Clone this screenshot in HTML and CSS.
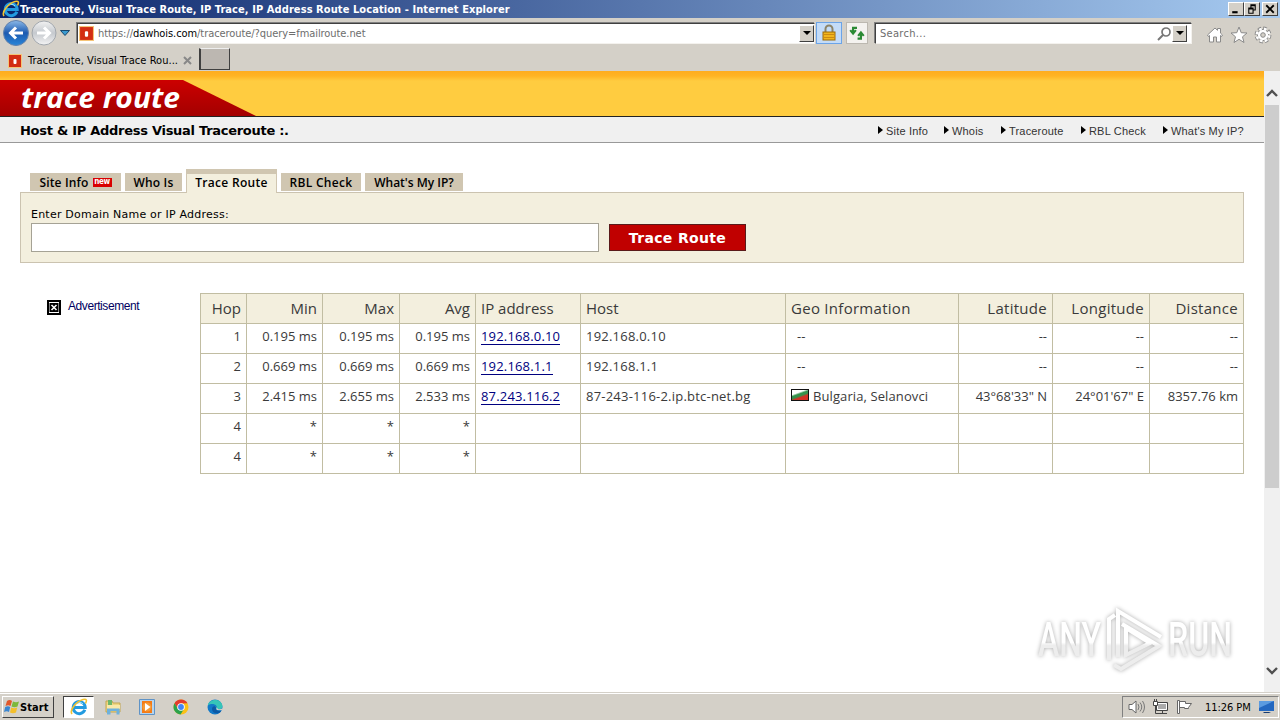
FILE: index.html
```
<!DOCTYPE html>
<html lang="en">
    <head>
        <meta charset="utf-8">
        <title>Traceroute, Visual Trace Route, IP Trace, IP Address Route Location</title>
        <link rel="stylesheet" href="styles.css">
    </head>
    <body>
        <svg class="defs" width="0" height="0">
            <symbol id="ie" viewBox="0 0 18 18">
                <path d="M14.8 11.8A6 6 0 1 1 15.2 9.400H4.600" fill="none" stroke="#239be0" stroke-width="3"/>
                <path d="M5 7a4.500 4 0 0 1 8-1" fill="none" stroke="#9be3ff" stroke-width="1"/>
                <path d="M2 16C-1 12 7 3 13 1.500c4-1 4 1 2.500 4" fill="none" stroke="#f2c230" stroke-width="1.600"/>
            </symbol>
            <symbol id="site" viewBox="0 0 14 14">
                <rect width="14" height="14" fill="#f5c477"/>
                <rect x="1" y="1" width="12" height="12" fill="#d32d12"/>
                <rect x="5.500" y="5" width="3" height="5" rx="1" fill="#fff"/>
            </symbol>
        </svg>

        <div class="titlebar">
            <svg class="title-icon" width="18" height="18"><use href="#ie"/></svg>
            <span class="title-text">Traceroute, Visual Trace Route, IP Trace, IP Address Route Location - Internet Explorer</span>
            <div class="window-buttons">
                <svg class="win-btn" viewBox="0 0 13 11"><path d="M3 8.500h5" stroke="#000" stroke-width="2"/></svg>
                <svg class="win-btn" viewBox="0 0 13 11"><path d="M5 1.500h5M5 2.500h5M9.500 2v4.500H8M5.500 2v2M3 4.500h5M3 5.500h5M3.500 5v4.500h4V5" fill="none" stroke="#000"/></svg>
                <svg class="win-btn close" viewBox="0 0 13 11"><path d="M3 2l7 7M10 2l-7 7" stroke="#000" stroke-width="1.700"/></svg>
            </div>
        </div>

        <div class="navbar">
            <svg class="back" width="28" height="28" viewBox="0 0 28 28">
                <defs><linearGradient id="blue" x2="0" y2="1"><stop stop-color="#8bb9e8"/><stop offset=".5" stop-color="#1c5ab0"/><stop offset="1" stop-color="#2a86d8"/></linearGradient></defs>
                <circle cx="14" cy="14" r="12.500" fill="url(#blue)" stroke="#6281ac"/>
                <path d="M21 14H9M14 8.500L8.500 14l5.500 5.500" fill="none" stroke="#fff" stroke-width="3"/>
            </svg>
            <svg class="forward" width="28" height="28" viewBox="0 0 28 28">
                <defs><linearGradient id="gray" x2="0" y2="1"><stop stop-color="#f2f2f2"/><stop offset=".5" stop-color="#c5c9ce"/><stop offset="1" stop-color="#f4f4f4"/></linearGradient></defs>
                <circle cx="14" cy="14" r="12" fill="url(#gray)" stroke="#a2a7ad"/>
                <path d="M7 14h12M14 8.500l5.500 5.500-5.500 5.500" fill="none" stroke="#fff" stroke-width="3"/>
            </svg>
            <svg class="history" width="10" height="6" viewBox="0 0 10 6"><path d="M.500.500h9L5 5.500z" fill="#3a9bd0" stroke="#17466c"/></svg>
            <div class="address">
                <svg width="15" height="15"><use href="#site"/></svg>
                <span class="url"><span class="dim">https://</span>dawhois.com<span class="dim">/traceroute/?query=fmailroute.net</span></span>
                <span class="drop"></span>
            </div>
            <div class="nav-btn lock">
                <svg width="16" height="18" viewBox="0 0 16 18">
                    <path d="M4.500 9V5a3.500 3.500 0 0 1 7 0v4" fill="none" stroke="#8c8468" stroke-width="2"/>
                    <rect x="2" y="8" width="12" height="8" fill="#f1b51c" stroke="#9c6a08"/>
                    <path d="M2 10.500h12M2 13.500h12" stroke="#cc8a10"/>
                </svg>
            </div>
            <div class="nav-btn refresh">
                <svg width="18" height="18" viewBox="0 0 16 16">
                    <path d="M8 3.500H4.500V8M2 5.500L4.500 8.500 7 5.500M8.500 13h3V8M9 10.500l2.500-3 2.500 3" fill="none" stroke="#2b8a34" stroke-width="1.900"/>
                </svg>
            </div>
            <div class="search">
                <span class="search-text">Search...</span>
                <svg width="15" height="15" viewBox="0 0 15 15"><circle cx="9" cy="6" r="4" fill="none" stroke="#777" stroke-width="1.700"/><path d="M6 9l-5 5" stroke="#777" stroke-width="2"/></svg>
                <span class="drop"></span>
            </div>
            <div class="tools">
                <svg width="18" height="18" viewBox="0 0 18 18"><path d="M1.500 9L9 2l2.500 2.300V2.500h3v4.600l2 1.900-1 1.500-1-1V16h-4v-5h-3v5h-4V9.500l-1 1z" fill="#fff" stroke="#8a8a8a"/></svg>
                <svg width="18" height="18" viewBox="0 0 18 18"><path d="M9 1l2.200 5.700 5.800.300-4.500 3.800L14 16.500 9 13.300 4 16.500l1.500-5.700L1 7l5.800-.300z" fill="#fff" stroke="#8a8a8a"/></svg>
                <svg width="18" height="18" viewBox="0 0 18 18">
                    <circle cx="9" cy="9" r="6.700" fill="none" stroke="#8a8a8a" stroke-width="3.400" stroke-dasharray="3.400 1.860"/>
                    <circle cx="9" cy="9" r="5.600" fill="#fff" stroke="#8a8a8a"/>
                    <circle cx="9" cy="9" r="6.200" fill="none" stroke="#fff" stroke-width="2.600" stroke-dasharray="2.600 2.270" stroke-dashoffset="-.2"/>
                    <circle cx="9" cy="9" r="2.300" fill="#d4d0c8" stroke="#8a8a8a"/>
                </svg>
            </div>
        </div>

        <div class="tabbar">
            <div class="browser-tab">
                <svg width="14" height="14"><use href="#site"/></svg>
                <span class="tab-title">Traceroute, Visual Trace Rou...</span>
                <svg class="tab-close" width="9" height="9" viewBox="0 0 9 9"><path d="M1 1l7 7M8 1L1 8" stroke="#888" stroke-width="2"/></svg>
            </div>
            <div class="new-tab"></div>
        </div>

        <div class="viewport">
            <div class="page">
                <div class="banner">
                    <svg class="banner-shape" width="256" height="36" viewBox="0 0 256 36">
                        <defs><linearGradient id="red" x2="0" y2="1"><stop stop-color="#cc0000"/><stop offset="1" stop-color="#a30000"/></linearGradient></defs>
                        <path d="M0 0h183l73 36H0z" fill="url(#red)"/>
                        <text class="logo" x="21" y="28" textLength="159" lengthAdjust="spacingAndGlyphs">trace route</text>
                    </svg>
                </div>
                <div class="subhead">
                    <span class="slogan">Host &amp; IP Address Visual Traceroute :.</span>
                    <div class="links">
                        <a class="l1">Site Info</a>
                        <a class="l2">Whois</a>
                        <a class="l3">Traceroute</a>
                        <a class="l4">RBL Check</a>
                        <a class="l5">What's My IP?</a>
                    </div>
                </div>

                <div class="tabs">
                    <div class="tab t1">Site Info <span class="new">new</span></div>
                    <div class="tab t2">Who Is</div>
                    <div class="tab t3 active">Trace Route</div>
                    <div class="tab t4">RBL Check</div>
                    <div class="tab t5">What's My IP?</div>
                </div>
                <div class="panel">
                    <div class="label">Enter Domain Name or IP Address:</div>
                    <div class="form">
                        <input class="query" type="text">
                        <button class="submit">Trace Route</button>
                    </div>
                </div>

                <div class="content">
                    <div class="ad">
                        <svg width="14" height="15" viewBox="0 0 14 15"><path d="M1 1h12v13H1z" fill="#fff" stroke="#000" stroke-width="2"/><path d="M2.500 3h9v9h-9z" fill="#000"/><path d="M4.500 5l5 5M9.500 5l-5 5" stroke="#fff" stroke-width="1.600"/></svg>
                        <span>Advertisement</span>
                    </div>
                    <table class="hops">
                        <colgroup>
                            <col class="c-hop"><col class="c-min"><col class="c-max"><col class="c-avg"><col class="c-ip">
                            <col class="c-host"><col class="c-geo"><col class="c-lat"><col class="c-lon"><col class="c-dist">
                        </colgroup>
                        <tr><th>Hop</th><th>Min</th><th>Max</th><th>Avg</th><th class="left">IP address</th><th class="left">Host</th><th class="left wide">Geo Information</th><th class="wide">Latitude</th><th class="wide">Longitude</th><th class="wide">Distance</th></tr>
                        <tr><td>1</td><td>0.195 ms</td><td>0.195 ms</td><td>0.195 ms</td><td class="left"><a>192.168.0.10</a></td><td class="left host">192.168.0.10</td><td class="left none">--</td><td>--</td><td>--</td><td>--</td></tr>
                        <tr><td>2</td><td>0.669 ms</td><td>0.669 ms</td><td>0.669 ms</td><td class="left"><a>192.168.1.1</a></td><td class="left host">192.168.1.1</td><td class="left none">--</td><td>--</td><td>--</td><td>--</td></tr>
                        <tr><td>3</td><td>2.415 ms</td><td>2.655 ms</td><td>2.533 ms</td><td class="left"><a>87.243.116.2</a></td><td class="left host">87-243-116-2.ip.btc-net.bg</td><td class="left geo"><span class="flag"></span>Bulgaria, Selanovci</td><td class="coord">43°68'33" N</td><td class="coord">24°01'67" E</td><td>8357.76 km</td></tr>
                        <tr><td>4</td><td>*</td><td>*</td><td>*</td><td></td><td></td><td></td><td></td><td></td><td></td></tr>
                        <tr><td>4</td><td>*</td><td>*</td><td>*</td><td></td><td></td><td></td><td></td><td></td><td></td></tr>
                    </table>
                </div>

                <svg class="watermark" width="204" height="68" viewBox="0 0 204 68">
                    <defs><linearGradient id="fade" x2="0" y2="1"><stop offset=".55" stop-color="#fff"/><stop offset=".6" stop-color="#ededed"/></linearGradient></defs>
                    <g class="mark-text">
                        <text x="4" y="50" textLength="63" lengthAdjust="spacingAndGlyphs">ANY</text>
                        <text x="134" y="50" textLength="64" lengthAdjust="spacingAndGlyphs">RUN</text>
                    </g>
                    <g class="mark-logo">
                        <path d="M75 54V13l6-4M84 51V5l43 26M88 18l37 22-38 23-7-4M92 49V22l24 15z"/>
                    </g>
                </svg>
            </div>
            <div class="scrollbar">
                <svg class="arrow" width="12" height="8" viewBox="0 0 12 8"><path d="M1 7l5-5 5 5" fill="none" stroke="#505050" stroke-width="2.400"/></svg>
                <div class="thumb"></div>
                <svg class="arrow" width="12" height="8" viewBox="0 0 12 8"><path d="M1 1l5 5 5-5" fill="none" stroke="#505050" stroke-width="2.400"/></svg>
            </div>
        </div>

        <div class="taskbar">
            <div class="start">
                <svg width="16" height="16" viewBox="0 0 16 16">
                    <path d="M3 2c2-1.500 4-1 5 0L6.500 7c-1.500-1-3-1-5 0z" fill="#e2582a"/>
                    <path d="M9 2.500c2 1 4 1 6 0L13.500 7.500c-2 1-4 1-6 0z" fill="#7db83c"/>
                    <path d="M1.200 8c2-1 3.500-1 5 0L5 13c-1.500-1-3-1-5 0z" fill="#3b86d0"/>
                    <path d="M7.200 8.500c2 1 4 1 6 0L12 13.500c-2 1-4 1-6 0z" fill="#f4bf2b"/>
                </svg>
                <span>Start</span>
            </div>
            <div class="task open"><svg width="18" height="18"><use href="#ie"/></svg></div>
            <div class="task"><svg width="16" height="16" viewBox="0 0 16 16"><path d="M1 2h6l1 2h7v9H1z" fill="#f0d681" stroke="#c2a650"/><path d="M3 1h4v5H3z" fill="#6db66b"/><path d="M2 6h13v4H2z" fill="#f9e9a9"/><path d="M2 15.500V9.500h12.500v6h-3V12h-6v3.500z" fill="#6fb1dc"/></svg></div>
            <div class="task"><svg width="16" height="16" viewBox="0 0 16 16"><path d="M.500.500h15v15H.500z" fill="#b5d4ee" stroke="#5f93c6"/><path d="M3 2h10v12H3z" fill="#f47b16"/><circle cx="8" cy="8" r="4.500" fill="#f59a36"/><path d="M6 4l5.500 4L6 12z" fill="#fff"/></svg></div>
            <div class="task"><svg width="16" height="16" viewBox="0 0 16 16"><circle cx="8" cy="8" r="7.500" fill="#fbc116"/><path d="M1.500 4.250A7.500 7.500 0 0 1 14.500 4.250L8 4.500 4.800 9.800z" fill="#e33b2e"/><path d="M1.500 4.250A7.500 7.500 0 0 0 7.500 15.500L11 10H5z" fill="#2ba24c"/><circle cx="8" cy="8" r="3.800" fill="#fff"/><circle cx="8" cy="8" r="2.900" fill="#4285f4"/></svg></div>
            <div class="task"><svg width="16" height="16" viewBox="0 0 16 16"><circle cx="8" cy="8" r="7.500" fill="#1279c8"/><path d="M.800 6.500C2 0 14-1.500 15.500 7c0 3-3 4-6 3 2-4-4-7-8.700-3.500z" fill="#36c5b8"/><path d="M9 8c-1 3 2 5 5.500 3.500C12 16 5 15 5 10c0-3 3-3.500 4-2z" fill="#0c59a4"/><path d="M8 7.500c2 0 1 3 2 3.500l5 .300.500-2c-2 1.500-5 1-5 0z" fill="#d4d0c8"/></svg></div>
            <div class="tray">
                <svg class="speaker" width="17" height="16" viewBox="0 0 17 16"><path d="M1 5.500h3L8 2v12l-4-3.500H1z" fill="#fff" stroke="#666"/><path d="M10 5q2 3 0 6M12 3.500q3.500 4.500 0 9M14.500 2q4 6 0 12" fill="none" stroke="#777"/></svg>
                <svg class="net" width="17" height="16" viewBox="0 0 17 16"><path d="M4.500 3.500h11v8h-11z" fill="#aaa" stroke="#444"/><path d="M5.500 4.500h9v6h-9z" fill="none" stroke="#fff"/><path d="M7 14.500h8M10.500 12v2" stroke="#444"/><path d="M1.500 2.500h4v4h-4z" fill="#fff" stroke="#444"/><path d="M2.500 0v2M4.500 0v2M3.500 7v7.500H7" fill="none" stroke="#444"/></svg>
                <svg class="flag-icon" width="17" height="16" viewBox="0 0 17 16"><path d="M1.500 1.500h2v13h-2zM3.500 2.500h6v2h6l-3 4v1h-4v-1h-5z" fill="#fff" stroke="#666"/></svg>
                <span class="clock">11:26 PM</span>
                <svg width="15" height="14" viewBox="0 0 15 14"><path d="M0 1h15v10H0z" fill="#2468c0"/><path d="M0 1h15L0 8z" fill="#5b9be0"/><path d="M4 12h8l-2 1H5z" fill="#153a70"/></svg>
            </div>
        </div>
    </body>
</html>
```
FILE: styles.css
```
* {
    box-sizing: border-box;
}

body {
    margin: 0;
    width: 1280px;
    height: 720px;
    overflow: hidden;
    display: flex;
    flex-direction: column;
    background: #fff;
    font-family: "DejaVu Sans Condensed", "DejaVu Sans", sans-serif;
    font-size: 11px;
    color: #000;
}

svg {
    display: block;
    flex: none;
    overflow: visible;
}

.defs {
    position: absolute;
}

/* browser window */
.titlebar {
    height: 18px;
    display: flex;
    align-items: center;
    padding: 0 2px;
    background: linear-gradient(90deg, #0a246a, #a6caf0);
    color: #fff;
}

.title-text {
    font-weight: bold;
    white-space: nowrap;
    letter-spacing: 0.08px;
}

.window-buttons {
    display: flex;
    margin-left: auto;
}

.win-btn {
    width: 16px;
    height: 14px;
    background: #d4d0c8;
    border: 1px solid;
    border-color: #fff #404040 #404040 #fff;
}

.win-btn.close {
    margin-left: 2px;
}

.navbar {
    height: 30px;
    display: flex;
    align-items: center;
    background: #d4d0c8;
    padding: 0 8px 0 2px;
}

.history {
    margin: 0 6px 0 2px;
}

.address, .search {
    height: 21px;
    display: flex;
    align-items: center;
    background: #fff;
    border: 1px solid;
    border-color: #404040 #f4f2ee #f4f2ee #404040;
    box-shadow: -1px -1px #808080;
}

.address {
    width: 738px;
    margin-left: 1px;
    padding-left: 1px;
}

.url {
    margin-left: 4px;
    flex: 1;
    letter-spacing: -0.07px;
}

.dim {
    color: #6d6d6d;
}

.drop {
    width: 15px;
    height: 17px;
    background: #d4d0c8;
    border: 1px solid;
    border-color: #fff #404040 #404040 #fff;
    display: flex;
    align-items: center;
    justify-content: center;
}

.drop::before {
    content: "";
    border: 4px solid transparent;
    border-top-color: #000;
    border-bottom: 0;
}

.nav-btn {
    height: 22px;
    display: flex;
    align-items: center;
    justify-content: center;
}

.lock {
    width: 26px;
    margin-left: 1px;
    background: #c4dcf8;
    border: 1px solid #6ba4e8;
}

.refresh {
    width: 22px;
    margin-left: 4px;
    background: #f4f2ef;
    border: 1px solid #bcb8b0;
}

.search {
    width: 317px;
    margin-left: 7px;
    padding: 0 4px;
}

.search-text {
    flex: 1;
    color: #6d6d6d;
    letter-spacing: 0.3px;
}

.tools {
    display: flex;
    gap: 6px;
    margin-left: auto;
    padding-top: 3px;
}

.tabbar {
    height: 23px;
    display: flex;
    background: #d4d0c8;
}

.browser-tab {
    width: 199px;
    display: flex;
    align-items: center;
    padding: 2px 0 0 8px;
}

.tab-title {
    width: 155px;
    margin-left: 6px;
    white-space: nowrap;
    letter-spacing: 0.05px;
}

.new-tab {
    width: 31px;
    height: 22px;
    background: #bcb7b1;
    border: 1px solid #404040;
    border-left-width: 2px;
    border-top-color: #eee;
}

/* site */
.viewport {
    height: 621px;
    display: flex;
}

.page {
    width: 1264px;
    position: relative;
}

.banner {
    height: 46px;
    padding-top: 9px;
    border-bottom: 1px solid #222;
    background: linear-gradient(#ffac1e 0, #ffb424 5px, #ffcc40 10px);
}

.logo {
    font: italic bold 29px "Open Sans", sans-serif;
    fill: #fff;
}

.subhead {
    height: 26px;
    display: flex;
    align-items: center;
    padding: 0 20px;
    background: #f0f0f0;
    border-bottom: 1px solid #999;
}

.slogan {
    padding-top: 2px;
    font: bold 13px "DejaVu Sans", sans-serif;
    letter-spacing: -0.28px;
}

.links {
    display: flex;
    margin-left: auto;
    padding-top: 3px;
    font: 11px "Liberation Sans", sans-serif;
    letter-spacing: 0.18px;
    color: #333;
}

.links a {
    display: flex;
    white-space: nowrap;
}

.links a::before {
    content: "";
    margin: 1px 3px 0 1px;
    border: 4px solid transparent;
    border-left: 5px solid #000;
    border-right: 0;
    height: 0;
}

.l1 {
    width: 66px;
}

.l2 {
    width: 57px;
}

.l3 {
    width: 80px;
}

.l4, .l5 {
    width: 82px;
}

.tabs {
    height: 49px;
    display: flex;
    align-items: flex-end;
    gap: 4px;
    padding-left: 30px;
    font-family: "Open Sans", sans-serif;
    font-weight: 600;
    font-size: 12px;
    letter-spacing: 0.15px;
}

.tab {
    height: 18px;
    margin-bottom: 1px;
    background: #d0c6b1;
    display: flex;
    align-items: center;
    justify-content: center;
    white-space: nowrap;
}

.tab.active {
    height: 24px;
    margin-bottom: -1px;
    padding-bottom: 3px;
    background: #f3efde;
    border: 1px solid #d0c6b1;
    border-top-width: 5px;
    border-bottom: 0;
    letter-spacing: 0.3px;
    z-index: 1;
}

.t1 {
    width: 91px;
}

.t2 {
    width: 57px;
}

.t3 {
    width: 91px;
}

.t4 {
    width: 80px;
    letter-spacing: 0.3px;
}

.t5 {
    width: 98px;
    letter-spacing: 0;
}

.new {
    width: 19px;
    height: 9px;
    margin-left: 4px;
    background: #d90000;
    color: #fff;
    font: bold 8px/8px "DejaVu Sans Condensed", sans-serif;
    text-align: center;
    letter-spacing: -0.4px;
}

.panel {
    height: 71px;
    margin: 0 20px;
    padding: 14px 10px 0;
    background: #f3efde;
    border: 1px solid #cbc3b0;
}

.label {
    height: 16px;
    font: 11px/15px "DejaVu Sans", sans-serif;
    letter-spacing: 0.22px;
}

.form {
    display: flex;
    align-items: center;
}

.query {
    width: 568px;
    height: 29px;
    border: 1px solid #a5a295;
    background: #fff;
}

.submit {
    width: 137px;
    height: 27px;
    margin-left: 10px;
    padding: 0;
    background: #c00000;
    border: 1px solid #5a1a1a;
    color: #fff;
    font: bold 14px "DejaVu Sans", sans-serif;
    letter-spacing: 0.35px;
}

.content {
    display: flex;
    align-items: flex-start;
    margin-top: 30px;
}

.ad {
    width: 200px;
    display: flex;
    gap: 7px;
    padding: 7px 0 0 47px;
    font: 12px/13px "Liberation Sans", sans-serif;
    letter-spacing: -0.43px;
    color: #00005f;
}

.hops {
    width: 1044px;
    table-layout: fixed;
    border-collapse: collapse;
    font-family: "Open Sans", sans-serif;
    font-size: 13px;
    color: #3a3a3a;
}

.c-hop {
    width: 46px;
}

.c-min, .c-avg {
    width: 76px;
}

.c-max {
    width: 77px;
}

.c-ip {
    width: 105px;
}

.c-host {
    width: 205px;
}

.c-geo {
    width: 173px;
}

.c-lat, .c-dist {
    width: 94px;
}

.c-lon {
    width: 97px;
}

.hops th, .hops td {
    height: 30px;
    padding: 0 5px 2px;
    border: 1px solid #c1bda2;
    text-align: right;
    white-space: nowrap;
    line-height: 20px;
}

.hops th {
    background: #f3efde;
    font-size: 15px;
    font-weight: normal;
}

.hops .wide {
    letter-spacing: 0.28px;
}

.hops td {
    padding-bottom: 6px;
}

.hops .left {
    text-align: left;
}

.hops .host {
    letter-spacing: 0.22px;
}

.hops .geo {
    letter-spacing: 0.1px;
}

.hops .none {
    padding-left: 11px;
}

.hops a {
    color: #000080;
    border-bottom: 1px solid #000080;
    display: inline-block;
    line-height: 15px;
    letter-spacing: 0.17px;
}

.flag {
    display: inline-block;
    width: 18px;
    height: 12px;
    margin-right: 4px;
    border: 1px solid #111;
    background: linear-gradient(160deg, #fff 30%, #35934d 42%, #35934d 55%, #d53125 68%);
}

.watermark {
    position: absolute;
    left: 1034px;
    top: 535px;
    filter: drop-shadow(0 0 2px #aaa);
}

.mark-text {
    font: 500 48px Roboto, sans-serif;
    fill: url(#fade);
}

.mark-logo {
    fill: none;
    stroke: url(#fade);
    stroke-width: 4;
}

.scrollbar {
    width: 16px;
    background: #f0f0f0;
    display: flex;
    flex-direction: column;
    align-items: center;
    padding: 18px 0 17px;
}

.thumb {
    width: 14px;
    height: 383px;
    margin: 8px 0 auto;
    background: #cdcdcd;
}

/* taskbar */
.taskbar {
    height: 28px;
    display: flex;
    align-items: center;
    padding: 1px 1px 0 2px;
    background: #d4d0c8;
    border-top: 1px solid #d4d0c8;
    box-shadow: inset 0 1px #fff;
}

.start {
    width: 52px;
    height: 22px;
    display: flex;
    align-items: center;
    padding-left: 1px;
    margin-right: 9px;
    border: 1px solid;
    border-color: #fff #404040 #404040 #fff;
    font-weight: bold;
    letter-spacing: 0.1px;
}

.task {
    width: 34px;
    height: 22px;
    display: flex;
    align-items: center;
    justify-content: center;
}

.task.open {
    width: 31px;
    margin-right: 2px;
    background: #fff;
    border: 1px solid #404040;
    border-right-color: #fff;
    border-bottom-color: #fff;
}

.tray {
    width: 157px;
    height: 22px;
    margin-left: auto;
    display: flex;
    align-items: center;
    padding-left: 5px;
    border: 1px solid;
    border-color: #808080 #fff #fff #808080;
}

.net, .flag-icon {
    margin-left: 7px;
}

.clock {
    width: 54px;
    margin-left: 12px;
    white-space: nowrap;
    letter-spacing: -0.05px;
}
```
